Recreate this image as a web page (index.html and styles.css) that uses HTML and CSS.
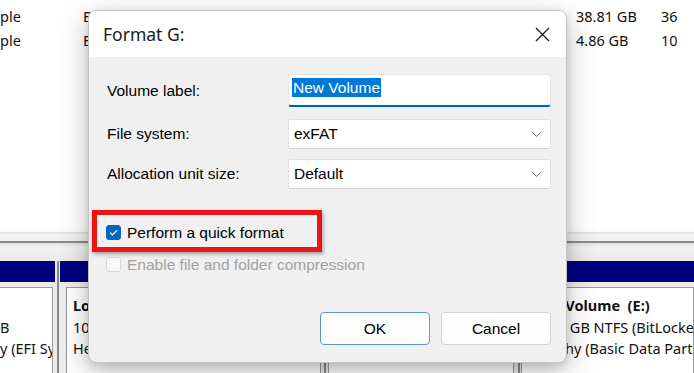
FILE: index.html
```html
<!DOCTYPE html>
<html>
<head>
<meta charset="utf-8">
<link rel="stylesheet" href="styles.css">
</head>
<body>
<div class="app">
  <div class="volumes">
    <div class="vrow"><span>ple</span><span>Basic</span><span>NTFS (BitLocker Encrypted)</span><span>Healthy (Basic Data Partition)</span><span>108.24 GB</span><span>38.81 GB</span><span>36</span></div>
    <div class="vrow"><span>ple</span><span>Basic</span><span>NTFS (BitLocker Encrypted)</span><span>Healthy (Basic Data Partition)</span><span>15.00 GB</span><span>4.86 GB</span><span>10</span></div>
  </div>
  <div class="divider"></div>
  <div class="disk">
    <div class="part p-a"><div class="part-head"></div><div class="part-box">&nbsp;<br>B<br>y (EFI System Partition)</div></div>
    <div class="part p-b"><div class="part-head"></div><div class="part-box"><b>Local Disk  (C:)</b><br>108.24 GB NTFS (BitLocker Encrypted)<br>Healthy (Boot, Page File, Crash Dump)</div></div>
    <div class="part p-c"><div class="part-head"></div><div class="part-box"><b>(G:)</b><br>15.00 GB<br>Healthy (Basic Data Partition)</div></div>
    <div class="part p-d"><div class="part-head"></div><div class="part-box"><b>New Volume  (E:)</b><br>15.00 GB NTFS (BitLocker Encrypted)<br>Healthy (Basic Data Partition)</div></div>
  </div>

  <div class="dialog">
    <div class="titlebar">
      <span class="title">Format G:</span>
      <svg class="close" width="15" height="15" viewBox="0 0 15 15"><path d="M1 1 L14 14 M14 1 L1 14" stroke="#1b1b1b" stroke-width="1.3" fill="none"/></svg>
    </div>
    <div class="dlg-body">
      <div class="form">
        <div class="frow"><span class="lbl">Volume label:</span><div class="input"><span class="sel">New Volume</span></div></div>
        <div class="frow"><span class="lbl">File system:</span><div class="select"><span>exFAT</span><svg width="9" height="5" viewBox="0 0 9 5"><path d="M0.5 0.5 L4.5 4.5 L8.5 0.5" stroke="#7a7a7a" stroke-width="1" fill="none"/></svg></div></div>
        <div class="frow"><span class="lbl">Allocation unit size:</span><div class="select"><span>Default</span><svg width="9" height="5" viewBox="0 0 9 5"><path d="M0.5 0.5 L4.5 4.5 L8.5 0.5" stroke="#7a7a7a" stroke-width="1" fill="none"/></svg></div></div>
      </div>
      <div class="highlight">
        <div class="check"><span class="cb checked"><svg width="15" height="15" viewBox="0 0 15 15"><path d="M4.2 7.6 L6.5 9.9 L10.9 5.3" stroke="#fff" stroke-width="1.2" fill="none"/></svg></span><span>Perform a quick format</span></div>
      </div>
      <div class="check disabled"><span class="cb"></span><span>Enable file and folder compression</span></div>
      <div class="buttons">
        <button class="btn primary">OK</button>
        <button class="btn">Cancel</button>
      </div>
    </div>
  </div>
</div>
</body>
</html>
```

FILE: styles.css
```css
* { box-sizing: border-box; }
body { margin: 0; background: #fff; font-family: "Noto Sans", sans-serif; }

.app {
  position: relative;
  width: 694px;
  height: 373px;
  overflow: hidden;
  display: flex;
  flex-direction: column;
  background: #fff;
}

.volumes { height: 230px; padding-top: 4px; font-size: 14.5px; color: #111; flex-shrink: 0; }
.vrow {
  display: grid;
  grid-template-columns: 83px 107px 126px 112px 148px 85px 1fr;
  height: 24px;
  align-items: center;
}
.vrow span { white-space: nowrap; overflow: hidden; padding-right: 6px; }

.divider {
  height: 31px;
  flex-shrink: 0;
  background: linear-gradient(to bottom, #fff 0, #fafafa 2px, #e2e2e2 2px, #e2e2e2 4px, #f4f4f4 4px, #f0f0f0 11px, #8a8a8a 11px, #8a8a8a 13px, #e4e4e4 13px, #f2f2f2 18px, #e9e9e9 31px);
}

.disk {
  flex: 1;
  display: grid;
  grid-template-columns: 57px 267px 194px 1fr;
  background: #ececec;
}
.part { display: flex; flex-direction: column; min-width: 0; }
.part + .part { border-left: 2px solid #8a8a8a; }
.part-head { height: 21px; background: #000080; }
.part-box {
  flex: 1;
  margin-top: 5px;
  background: #fff;
  border: 1px solid #9a9a9a;
  border-bottom: none;
  padding: 7px 6px;
  font-size: 14.5px;
  line-height: 21.5px;
  color: #111;
  white-space: pre;
  overflow: hidden;
}
.part-box b { font-weight: 700; }
.p-a .part-head { margin-right: 2px; }
.p-a .part-box { margin-right: 4px; border-left: none; padding-left: 0; }
.p-b .part-head { margin-left: 1px; margin-right: 2px; }
.p-b .part-box { margin-left: 7px; margin-right: 3px; }
.p-c .part-box { margin-left: 2px; margin-right: 4px; }
.p-d .part-box { margin-left: 1px; padding-left: 7px; }

/* dialog */
.dialog {
  position: absolute;
  left: 88px;
  top: 10px;
  width: 479px;
  height: 353px;
  background: #f0f0f0;
  border: 1px solid #c4c4c4;
  border-radius: 8px;
  box-shadow: 0 10px 30px rgba(0,0,0,0.26), 0 2px 8px rgba(0,0,0,0.12);
  display: flex;
  flex-direction: column;
  overflow: hidden;
  font-family: "Liberation Sans", Arial, sans-serif;
  font-size: 15.5px;
  color: #000;
}
.titlebar {
  height: 46px;
  background: #fff;
  display: flex;
  align-items: center;
  justify-content: space-between;
  padding: 0 16px 0 14px;
  flex-shrink: 0;
}
.title { font-family: "Noto Sans", sans-serif; font-size: 17.5px; color: #1a1a1a; }
.close { display: block; }

.dlg-body {
  flex: 1;
  display: flex;
  flex-direction: column;
  padding: 17px 15px 0 3px;
}
.form { padding-left: 15px; }
.frow { display: flex; align-items: center; }
.frow + .frow { margin-top: 10px; }
.frow:nth-child(2) { margin-top: 12px; }
.lbl { width: 181px; flex-shrink: 0; }

.input {
  flex: 1;
  height: 33px;
  background: #fff;
  border: 1px solid #e6e6e6;
  border-bottom: 2px solid #0063b8;
  border-radius: 3px;
  padding: 3px 3px;
}
.sel {
  display: inline-block;
  background: #0078d7;
  color: #fff;
  line-height: 19px;
  padding: 0 1px;
}
.select {
  flex: 1;
  height: 30px;
  background: #fff;
  border: 1px solid #e2e2e2;
  border-bottom-color: #d2d2d2;
  border-radius: 3px;
  padding: 0 9px 0 5px;
  display: flex;
  align-items: center;
  justify-content: space-between;
}
.select svg { display: block; }

.highlight {
  margin-top: 21px;
  width: 230px;
  border: 5px solid #ee1414;
  padding: 10px 9px 7px 9px;
  box-shadow: 1px 2px 4px rgba(0,0,0,0.35);
}
.check { display: flex; align-items: center; height: 15px; line-height: 15px; white-space: nowrap; }
.cb {
  width: 15px;
  height: 15px;
  border-radius: 3px;
  border: 1px solid #cfcfcf;
  background: #f9f9f9;
  margin-right: 6px;
  flex-shrink: 0;
}
.cb.checked { background: #0067c0; border-color: #0067c0; position: relative; }
.cb.checked svg { position: absolute; left: -1px; top: -1px; }
.check.disabled { margin-top: 5px; margin-left: 14px; color: #a2a2a2; }
.check.disabled .cb { border-color: #d6d6d6; }

.buttons {
  margin-top: 40px;
  display: flex;
  justify-content: flex-end;
  gap: 11px;
}
.btn {
  width: 110px;
  height: 33px;
  background: #fdfdfd;
  border: 1px solid #d4d4d4;
  border-radius: 4px;
  font-family: "Liberation Sans", Arial, sans-serif;
  font-size: 15.5px;
  color: #000;
  padding: 0;
}
.btn.primary { border-color: #5c95cf; }
```
